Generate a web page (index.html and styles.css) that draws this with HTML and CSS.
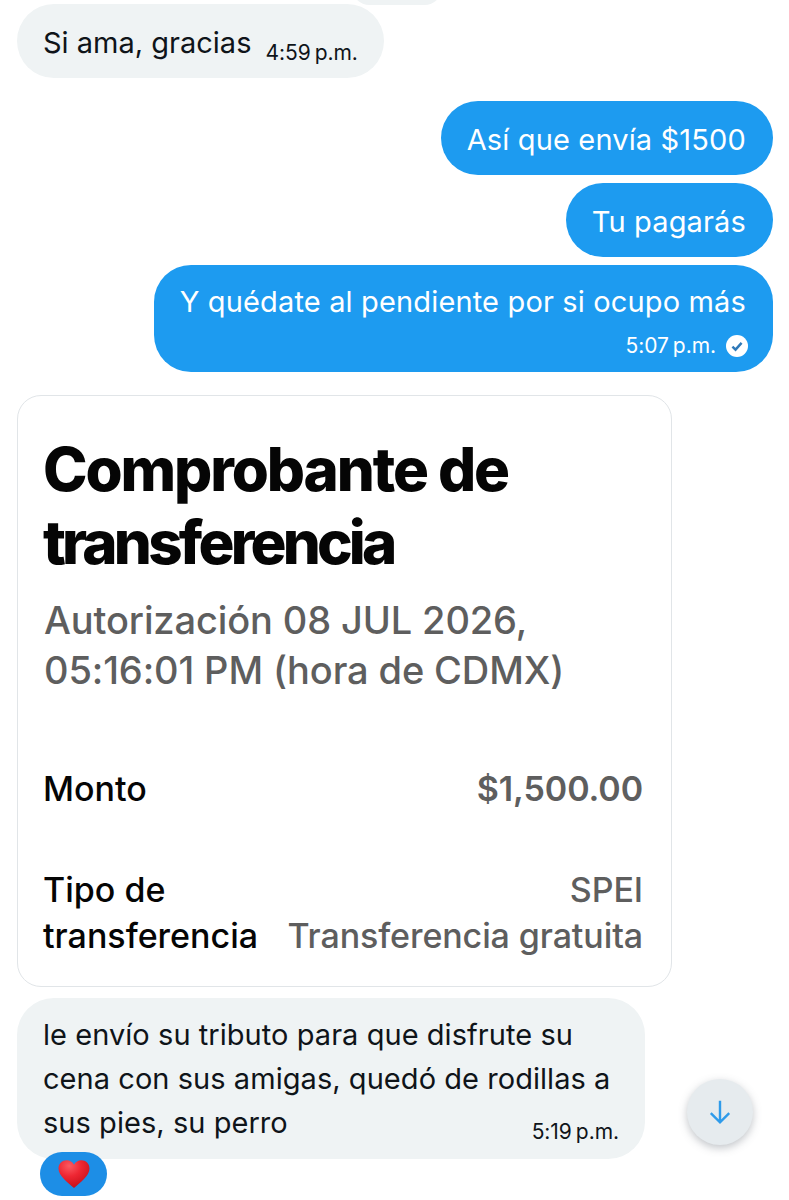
FILE: index.html
```html
<!DOCTYPE html>
<html lang="es">
<head>
  <meta charset="UTF-8" />
  <meta name="viewport" content="width=device-width, initial-scale=1" />
  <title>Mensajes</title>
  <link rel="stylesheet" href="styles.css">
</head>
<body>
  <div class="chat">
    <div class="peek"></div>

    <div class="bubble in first">
      <span>Si ama, gracias</span>
      <span class="time inline">4:59<i>p.m.</i></span>
    </div>

    <div class="out-group">
      <div class="bubble out">Así que envía $1500</div>
      <div class="bubble out">Tu pagarás</div>
      <div class="bubble out last">
        <div>Y quédate al pendiente por si ocupo más</div>
        <div class="time meta">5:07<i>p.m.</i>
          <svg class="seen" viewBox="0 0 24 24">
            <circle cx="12" cy="12" r="12" fill="#fff"/>
            <path d="M7 12.600l3.400 3.400L17 8.600" fill="none" stroke="#2f79b8" stroke-width="2.600"/>
          </svg>
        </div>
      </div>
    </div>

    <div class="card">
      <h1>Comprobante de <span class="tight">transferencia</span></h1>
      <p class="auth">Autorización 08 JUL 2026, 05:16:01 PM (hora de CDMX)</p>
      <div class="row amount">
        <span class="label">Monto</span>
        <span class="value">$1,500.00</span>
      </div>
      <div class="row kind">
        <span class="label">Tipo de transferencia</span>
        <span class="value">SPEI<br>Transferencia gratuita</span>
      </div>
    </div>

    <div class="bubble in tribute">
      <div>le envío su tributo para que disfrute su cena con sus amigas, quedó de rodillas a</div>
      <div class="foot">
        <span>sus pies, su perro</span>
        <span class="time">5:19<i>p.m.</i></span>
      </div>
      <div class="reaction">
        <svg viewBox="0 0 32 28" class="heart">
          <defs>
            <radialGradient id="red" cx="0.35" cy="0.2" r="0.85">
              <stop offset="0" stop-color="#fb5a62"/>
              <stop offset="0.45" stop-color="#ee2632"/>
              <stop offset="1" stop-color="#c20e18"/>
            </radialGradient>
          </defs>
          <path d="M16 28C10 22.500 0.500 16 0.500 8.500 0.500 3.500 4.300 0.300 8.600 0.300c3.200 0 6 1.700 7.400 4.500C17.400 2 20.200 0.300 23.400 0.300c4.300 0 8.100 3.200 8.100 8.200C31.500 16 22 22.500 16 28z" fill="url(#red)"/>
        </svg>
      </div>
    </div>

    <button class="scroll-down">
      <svg viewBox="0 0 24 24"><path d="M12 4v15M5.500 12.800L12 19.300l6.500-6.500" fill="none" stroke="#2f9bea" stroke-width="1.700"/></svg>
    </button>
  </div>
</body>
</html>
```
FILE: styles.css
```css
html, body {
  margin: 0;
  height: 1200px;
  overflow: hidden;
  background: #fff;
}

.chat {
  position: relative;
  height: 1200px;
  padding: 4px 16px 0 17px;
  box-sizing: border-box;
  font-family: Inter, 'Noto Sans', sans-serif;
  color: #0f1419;
}

.peek {
  position: absolute;
  top: -30px;
  left: 352px;
  width: 90px;
  height: 35px;
  border-radius: 18px;
  background: #eff3f4;
}

.bubble {
  box-sizing: border-box;
  font-size: 29px;
  letter-spacing: 0.15px;
  line-height: 37px;
  padding: 20px 27px 17px 26px;
  border-radius: 37px;
}

.in {
  background: #eff3f4;
}

.out {
  background: #1d9bf0;
  color: #fff;
  width: fit-content;
}

.first {
  display: flex;
  align-items: flex-start;
  gap: 14px;
  width: 367px;
  height: 74px;
  white-space: nowrap;
  letter-spacing: 0;
}

.first .time {
  margin-top: 15px;
}

.out-group {
  display: flex;
  flex-direction: column;
  align-items: flex-end;
  gap: 8px;
  margin-top: 23px;
}

.last {
  padding-top: 18px;
  padding-bottom: 13px;
}

.time {
  font-size: 21px;
  line-height: 27px;
  letter-spacing: -0.05px;
}

.time i {
  font-style: normal;
  margin-left: 4px;
}

.meta {
  display: flex;
  justify-content: flex-end;
  align-items: center;
  margin-top: 12px;
}

.seen {
  width: 22px;
  height: 22px;
  margin: 0 -2px 0 10px;
}

.card {
  box-sizing: border-box;
  width: 655px;
  height: 592px;
  margin-top: 23px;
  padding: 37px 28px 0 25px;
  border: 1px solid #e1e5e8;
  border-radius: 24px;
}

.card h1 {
  margin: 0;
  width: 520px;
  font-size: 60px;
  line-height: 73px;
  font-weight: 800;
  letter-spacing: -2.1px;
  color: #050505;
}

.tight {
  letter-spacing: -3.8px;
}

.auth {
  margin: 16px 0 0 1px;
  width: 560px;
  font-size: 38px;
  line-height: 50px;
  font-weight: 500;
  letter-spacing: -0.12px;
  color: #5e5e5e;
}

.row {
  display: flex;
  justify-content: space-between;
  font-size: 34px;
  line-height: 46px;
  font-weight: 500;
}

.amount {
  margin-top: 71px;
}

.amount .value {
  font-weight: 600;
}

.kind {
  margin-top: 55px;
}

.label {
  color: #050505;
}

.kind .label {
  width: 230px;
}

.value {
  text-align: right;
  letter-spacing: -0.1px;
  color: #5e5e5e;
}

.tribute {
  position: relative;
  width: 628px;
  height: 161px;
  margin-top: 11px;
  padding: 15px 26px 0;
  line-height: 44px;
  letter-spacing: 0.05px;
}

.foot {
  display: flex;
  justify-content: space-between;
  align-items: flex-end;
}

.reaction {
  position: absolute;
  left: 23px;
  top: 154px;
  width: 67px;
  height: 44px;
  display: flex;
  align-items: center;
  justify-content: center;
  border-radius: 22px;
  background: #1d8ee6;
}

.heart {
  width: 32px;
  height: 28px;
}

.scroll-down {
  position: absolute;
  left: 687px;
  top: 1079px;
  width: 66px;
  height: 66px;
  padding: 0;
  border: none;
  border-radius: 50%;
  background: #e6ebee;
  box-shadow: 0 3px 8px rgba(80, 90, 100, 0.35);
  display: flex;
  align-items: center;
  justify-content: center;
}

.scroll-down svg {
  width: 34px;
  height: 34px;
}
```
